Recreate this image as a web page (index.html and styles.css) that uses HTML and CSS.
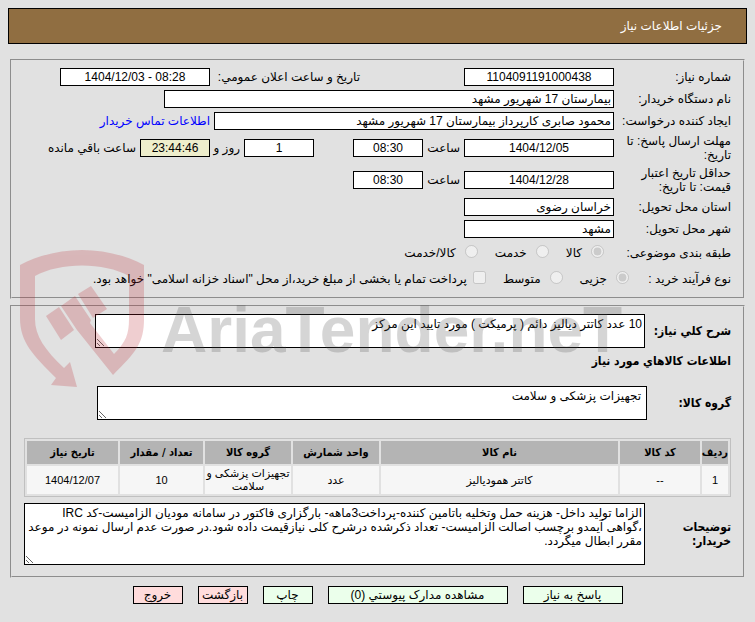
FILE: index.html
```html
<!DOCTYPE html>
<html lang="fa" dir="rtl">
<head>
  <meta charset="UTF-8">
  <meta name="viewport" content="width=device-width, initial-scale=1.0">
  <title>جزئیات اطلاعات نیاز</title>
  <link rel="stylesheet" href="styles.css">
</head>
<body>
  <header class="page-header">جزئیات اطلاعات نیاز</header>

  <form class="need-form">
    <!-- Need details -->
    <fieldset class="panel">
      <div class="row">
        <label class="caption" for="needNo">شماره نیاز:</label>
        <input class="box date" id="needNo" type="text" value="1104091191000438" readonly>
        <label class="announce" for="announceDate">تاریخ و ساعت اعلان عمومي:</label>
        <input class="box date" id="announceDate" type="text" value="1404/12/03 - 08:28" dir="ltr" readonly>
      </div>
      <div class="row">
        <label class="caption" for="buyer">نام دستگاه خریدار:</label>
        <input class="box buyer" id="buyer" type="text" value="بیمارستان 17 شهریور مشهد" readonly>
      </div>
      <div class="row">
        <label class="caption" for="creator">ایجاد کننده درخواست:</label>
        <input class="box creator" id="creator" type="text" value="محمود صابری کارپرداز بیمارستان 17 شهریور مشهد" readonly>
        <a class="contact" href="#">اطلاعات تماس خریدار</a>
      </div>
      <div class="row">
        <label class="caption" for="replyDate">مهلت ارسال پاسخ: تا تاریخ:</label>
        <input class="box date" id="replyDate" type="text" value="1404/12/05" readonly>
        <label class="unit" for="replyTime">ساعت</label>
        <input class="box time" id="replyTime" type="text" value="08:30" readonly>
        <input class="box time days" id="daysLeft" type="text" value="1" readonly>
        <label class="unit-days" for="daysLeft">روز و</label>
        <input class="box time countdown" id="countdown" type="text" value="23:44:46" readonly>
        <label for="countdown">ساعت باقي مانده</label>
      </div>
      <div class="row">
        <label class="caption" for="priceDate">حداقل تاریخ اعتبار قیمت: تا تاریخ:</label>
        <input class="box date" id="priceDate" type="text" value="1404/12/28" readonly>
        <label class="unit" for="priceTime">ساعت</label>
        <input class="box time" id="priceTime" type="text" value="08:30" readonly>
      </div>
      <div class="row">
        <label class="caption" for="province">استان محل تحویل:</label>
        <input class="box place" id="province" type="text" value="خراسان رضوی" readonly>
      </div>
      <div class="row">
        <label class="caption" for="city">شهر محل تحویل:</label>
        <input class="box place" id="city" type="text" value="مشهد" readonly>
      </div>
      <div class="row options">
        <span class="caption">طبقه بندی موضوعی:</span>
        <label class="option first"><input type="radio" name="subject" checked disabled>کالا</label>
        <label class="option"><input type="radio" name="subject" disabled>خدمت</label>
        <label class="option"><input type="radio" name="subject" disabled>کالا/خدمت</label>
      </div>
      <div class="row options">
        <span class="caption short">نوع فرآیند خرید :</span>
        <label class="option"><input type="radio" name="process" checked disabled>جزیی</label>
        <label class="option"><input type="radio" name="process" disabled>متوسط</label>
        <label class="option treasury"><input type="checkbox" disabled>پرداخت تمام یا بخشی از مبلغ خرید،از محل "اسناد خزانه اسلامی" خواهد بود.</label>
      </div>
    </fieldset>

    <!-- Goods -->
    <fieldset class="panel goods">
      <div class="row">
        <label class="caption strong" for="summary">شرح کلي نیاز:</label>
        <textarea class="area" id="summary" readonly>10 عدد کاتتر دیالیز دائم ( پرمیکت ) مورد تایید این مرکز</textarea>
      </div>
      <h2 class="section-title">اطلاعات کالاهاي مورد نیاز</h2>
      <div class="row">
        <label class="caption strong" for="group">گروه کالا:</label>
        <textarea class="area group" id="group" readonly>تجهیزات پزشکی و سلامت</textarea>
      </div>

      <table class="items">
        <colgroup>
          <col class="c-row"><col class="c-code"><col><col class="c-unit"><col class="c-unit"><col class="c-count"><col class="c-date">
        </colgroup>
        <thead>
          <tr>
            <th>ردیف</th>
            <th>کد کالا</th>
            <th>نام کالا</th>
            <th>واحد شمارش</th>
            <th>گروه کالا</th>
            <th>تعداد / مقدار</th>
            <th>تاریخ نیاز</th>
          </tr>
        </thead>
        <tbody>
          <tr>
            <td>1</td>
            <td>--</td>
            <td>کاتتر همودیالیز</td>
            <td>عدد</td>
            <td>تجهیزات پزشکی و سلامت</td>
            <td>10</td>
            <td>1404/12/07</td>
          </tr>
        </tbody>
      </table>

      <div class="row">
        <label class="caption strong" for="notes">توضیحات خریدار:</label>
        <textarea class="area notes" id="notes" readonly>الزاما تولید داخل- هزینه حمل وتخلیه باتامین کننده-پرداخت3ماهه- بارگزاری فاکتور در سامانه مودیان الزامیست-کد IRC ،گواهی آیمدو برچسب اصالت الزامیست- تعداد ذکرشده درشرح کلی نیازقیمت داده شود.در صورت عدم ارسال نمونه در موعد مقرر ابطال میگردد.</textarea>
      </div>
    </fieldset>

    <div class="actions">
      <button class="btn reply" type="button">پاسخ به نیاز</button>
      <button class="btn docs" type="button">مشاهده مدارک پیوستي (0)</button>
      <button class="btn" type="button">چاپ</button>
      <button class="btn leave" type="button">بازگشت</button>
      <button class="btn leave" type="button">خروج</button>
    </div>
  </form>

  <!-- Watermark -->
  <svg class="watermark" width="640" height="150" viewBox="0 0 640 150" aria-hidden="true">
    <g class="mark">
      <path d="M0 15 C38 -5 86 -5 124 15 V69 C124 93 116 102 93 125 L57 80 L41 56 L55 46 L71 70 L70 73 L94 104 C106 92 109 84 109 69 V26 C84 12 40 12 15 26 V69 C15 86 25 100 44 118 L50 112 L57 137 L31 135 L36 128 C13 105 0 92 0 68 Z"/>
      <path d="M26 66 L39 57 L54 80 L41 90 Z"/>
      <path d="M58 44 L71 36 L87 59 L73 68 Z"/>
    </g>
    <text class="brand" x="141" y="102">AriaTender.neT</text>
  </svg>
</body>
</html>
```

FILE: styles.css
```css
* { box-sizing: border-box; }

body {
  margin: 8px;
  background: #e1e1e1;
  color: #000;
  font: 12px/14px "Liberation Sans", "DejaVu Sans", sans-serif;
  position: relative;
}

input, textarea, button { font: inherit; color: inherit; }

.page-header {
  background: #906e41;
  color: #fff;
  border: 1px solid #000;
  padding: 10px 24px;
  margin-bottom: 15px;
}

.panel {
  margin: 0 2px 6px;
  padding: 7px 12px;
  border: 2px groove #e1e1e1;
  min-width: 0;
}

.row {
  display: flex;
  align-items: center;
  gap: 4px;
  margin-bottom: 4px;
}
.panel .row:last-child { margin-bottom: 0; }
.panel.goods { padding-bottom: 11px; }

.caption { width: 113px; flex: none; }
.strong, .section-title, .items th {
  font-family: "DejaVu Sans Condensed", "DejaVu Sans", sans-serif;
  font-weight: bold;
}
.strong { width: 82px; }

.box {
  height: 18px;
  padding: 0 2px;
  border: 1px solid #000;
  background: #fff;
  min-width: 0;
}
.date { width: 150px; text-align: center; }
.time { width: 70px; text-align: center; }
.place { width: 150px; }
.buyer { width: 450px; }
.creator { width: 400px; }
.countdown { background: #eeeecc; }

.announce { width: 146px; margin-right: 100px; white-space: nowrap; }
.unit { width: 33px; }
.days { margin-right: 35px; }
.unit-days { width: 26px; white-space: nowrap; }
.contact { color: #00f; text-decoration: none; }

.options { height: 22px; gap: 0; }
.options .caption { width: 117px; }
.options .short { width: 102px; }
.option {
  display: flex;
  align-items: center;
  gap: 9px;
  margin-left: 17px;
  white-space: nowrap;
}
.option.first { margin-right: 10px; }
.option input { width: 13px; height: 13px; margin: 0 0 3px; }
.option.treasury { gap: 6px; margin-left: 0; }

.area {
  width: 550px;
  height: 34px;
  padding: 2px;
  border: 1px solid #000;
  background: #fff;
  display: block;
}
.area.group { padding: 2px 5px; }
.group { margin-right: -2px; }
.section-title { font-size: 12px; margin: 6px 0 18px; }

.items {
  width: 100%;
  table-layout: fixed;
  border: 1px solid #c0c0c0;
  border-spacing: 2px;
  margin: 18px 0 6px;
  font-size: 11px;
  line-height: 13px;
  text-align: center;
}
.items th { background: #b4b4b4; height: 23px; padding: 0; white-space: nowrap; }
.items td { background: #f6f6f6; height: 28px; padding: 1px 0; }
.c-row { width: 26px; }
.c-code { width: 80px; }
.c-unit { width: 86px; }
.c-count { width: 83px; }
.c-date { width: 91px; }

.notes { flex: 1; height: 62px; }

.actions {
  display: flex;
  justify-content: center;
  gap: 15px;
  margin-top: 8px;
}
.btn {
  width: 50px;
  height: 18px;
  padding: 0;
  border: 1px solid #000;
  background: #ebffeb;
  white-space: nowrap;
  cursor: pointer;
}
.reply { width: 100px; }
.docs { width: 180px; }
.leave { background: #ffdcdc; }

.watermark {
  position: absolute;
  left: 12px;
  top: 242px;
  direction: ltr;
  pointer-events: none;
}
.mark { fill: #b9232d; opacity: 0.22; }
.brand {
  font: bold 64px "Liberation Sans", sans-serif;
  fill: #505050;
  opacity: 0.23;
}
```
